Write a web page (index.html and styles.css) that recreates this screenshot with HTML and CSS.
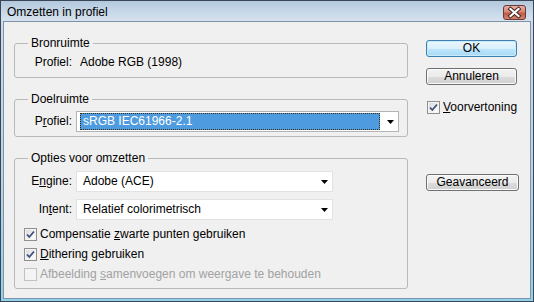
FILE: index.html
```html
<!DOCTYPE html>
<html>
<head>
<meta charset="utf-8">
<link rel="stylesheet" href="styles.css">
</head>
<body>
<div class="window">
  <div class="titlebar">
    <span class="title">Omzetten in profiel</span>
    <div class="close">
      <svg width="21" height="13" viewBox="0 0 21 13">
        <path d="M6.5 3 L14.5 10 M14.5 3 L6.5 10" stroke="#3a2020" stroke-width="4" stroke-linecap="square"/>
        <path d="M6.5 3 L14.5 10 M14.5 3 L6.5 10" stroke="#ffffff" stroke-width="2.2" stroke-linecap="square"/>
      </svg>
    </div>
  </div>
  <div class="client">
    <div class="main">
      <fieldset class="group g-src">
        <legend>Bronruimte</legend>
        <div class="row">
          <span class="lbl">Profiel:</span>
          <span class="val">Adobe RGB (1998)</span>
        </div>
      </fieldset>
      <fieldset class="group g-dst">
        <legend>Doelruimte</legend>
        <div class="row">
          <span class="lbl">P<u>r</u>ofiel:</span>
          <div class="select wide focus">
            <span class="highlight">sRGB IEC61966-2.1</span>
            <svg class="arrow" width="7" height="4" viewBox="0 0 7 4"><path d="M0 0 H7 L3.5 4 Z" fill="#000"/></svg>
          </div>
        </div>
      </fieldset>
      <fieldset class="group g-opt">
        <legend>Opties voor omzetten</legend>
        <div class="fields">
          <div class="row">
            <span class="lbl">E<u>n</u>gine:</span>
            <div class="select narrow">
              <span class="sel-text">Adobe (ACE)</span>
              <svg class="arrow" width="7" height="4" viewBox="0 0 7 4"><path d="M0 0 H7 L3.5 4 Z" fill="#000"/></svg>
            </div>
          </div>
          <div class="row">
            <span class="lbl">In<u>t</u>ent:</span>
            <div class="select narrow">
              <span class="sel-text">Relatief colorimetrisch</span>
              <svg class="arrow" width="7" height="4" viewBox="0 0 7 4"><path d="M0 0 H7 L3.5 4 Z" fill="#000"/></svg>
            </div>
          </div>
        </div>
        <div class="checks">
          <div class="check">
            <span class="cb checked"><svg width="11" height="11" viewBox="0 0 11 11"><path d="M2 5.5 L4.3 8 L9 2.5" fill="none" stroke="#3d4f7a" stroke-width="1.8"/></svg></span>
            <span>Compensatie <u>z</u>warte punten gebruiken</span>
          </div>
          <div class="check">
            <span class="cb checked"><svg width="11" height="11" viewBox="0 0 11 11"><path d="M2 5.5 L4.3 8 L9 2.5" fill="none" stroke="#3d4f7a" stroke-width="1.8"/></svg></span>
            <span><u>D</u>ithering gebruiken</span>
          </div>
          <div class="check disabled">
            <span class="cb"></span>
            <span>Afbeelding <u>s</u>amenvoegen om weergave te behouden</span>
          </div>
        </div>
      </fieldset>
    </div>
    <div class="side">
      <div class="btn default">OK</div>
      <div class="btn btn-cancel">Annuleren</div>
      <div class="check preview">
        <span class="cb checked"><svg width="11" height="11" viewBox="0 0 11 11"><path d="M2 5.5 L4.3 8 L9 2.5" fill="none" stroke="#3d4f7a" stroke-width="1.8"/></svg></span>
        <span><u>V</u>oorvertoning</span>
      </div>
      <div class="btn btn-adv">Geavanceerd</div>
    </div>
  </div>
</div>
</body>
</html>
```

FILE: styles.css
```css
html, body {
  margin: 0;
  padding: 0;
}
body {
  font: 12px/15px "Liberation Sans", Arial, sans-serif;
  color: #000;
  background: #fff;
}
.window {
  width: 534px;
  height: 302px;
  box-sizing: border-box;
  border: 1px solid #3a4657;
  background: linear-gradient(to bottom, #b2c7dc 0px, #cddbea 20px, #b9d3e6 60%, #8fd3ea 100%);
  display: flex;
  flex-direction: column;
}
.titlebar {
  height: 20px;
  flex: none;
  display: flex;
  justify-content: space-between;
  align-items: flex-start;
  background: linear-gradient(to bottom, #b3c8dd, #c9d9e9 60%, #d6e2ee);
}
.title {
  padding: 4px 0 0 6px;
  color: #000;
}
.close {
  margin: 4px 7px 0 0;
  width: 23px;
  height: 15px;
  box-sizing: border-box;
  border: 1px solid #6b3a36;
  border-radius: 3px;
  background: linear-gradient(to bottom, #e9aea4 0%, #d78677 45%, #c25a45 55%, #d6826e 100%);
  display: flex;
  align-items: center;
  justify-content: center;
}
.close svg {
  display: block;
}
.client {
  flex: 1;
  margin: 0 2px 2px 2px;
  border: 1px solid #7f93a8;
  background: #f0f0f0;
  display: flex;
  align-items: flex-start;
  gap: 18px;
  padding: 14px 0 0 10px;
}
.main {
  width: 394px;
  flex: none;
  display: flex;
  flex-direction: column;
  gap: 14px;
}
.group {
  margin: 0;
  padding: 0;
  min-width: 0;
  border: 1px solid #b9b9b9;
  border-radius: 3px;
}
.group legend {
  margin-left: 13px;
  padding: 0 3px;
  line-height: 15px;
}
.row {
  display: flex;
  align-items: center;
}
.lbl {
  width: 57px;
  flex: none;
  text-align: right;
}
.val {
  margin-left: 8px;
}
.g-src .row {
  padding: 4px 0 7px;
}
.g-dst .row {
  padding: 4px 0 4px;
}
.select {
  margin-left: 4px;
  height: 21px;
  box-sizing: border-box;
  border: 1px solid #e2e2e2;
  background: #fff;
  display: flex;
  align-items: center;
}
.select.focus {
  border-color: #b4b4b4;
}
.select.wide {
  width: 323px;
}
.select.narrow {
  width: 257px;
}
.sel-text {
  padding-left: 6px;
  flex: 1;
  white-space: nowrap;
}
.highlight {
  flex: none;
  width: 300px;
  height: 17px;
  box-sizing: border-box;
  margin-left: 3px;
  padding-left: 2px;
  background: #4e9be0;
  color: #fff;
  border: 1px dotted #3a2a10;
  line-height: 15px;
  white-space: nowrap;
}
.arrow {
  display: block;
  margin-left: auto;
  margin-right: 4px;
  flex: none;
}
.fields {
  padding-top: 5px;
  display: flex;
  flex-direction: column;
  gap: 7px;
}
.checks {
  padding: 4px 0 4px 9px;
  display: flex;
  flex-direction: column;
}
.check {
  height: 20px;
  display: flex;
  align-items: center;
  white-space: nowrap;
}
.check.disabled {
  color: #a2a2a2;
}
.cb {
  width: 13px;
  height: 13px;
  box-sizing: border-box;
  flex: none;
  margin-right: 3px;
  border: 1px solid #8f8f8f;
  box-shadow: inset 0 0 0 1px #f4f4f4;
  background: linear-gradient(135deg, #d6d6d6 0%, #f3f3f3 60%, #ffffff 100%);
  display: flex;
  align-items: center;
  justify-content: center;
}
.cb svg {
  display: block;
}
.disabled .cb {
  border-color: #c2c2c2;
  background: #f4f4f4;
}
.side {
  width: 93px;
  flex: none;
  margin-top: 4px;
  display: flex;
  flex-direction: column;
  align-items: flex-start;
}
.btn {
  width: 91px;
  height: 17px;
  box-sizing: border-box;
  border: 1px solid #707070;
  border-radius: 3px;
  background: linear-gradient(to bottom, #f3f3f3 0%, #ebebeb 50%, #dddddd 51%, #cfcfcf 100%);
  box-shadow: inset 0 0 0 1px #fbfbfb;
  text-align: center;
  line-height: 15px;
}
.btn.default {
  border-color: #3c7fb1;
  background: linear-gradient(to bottom, #eaf6fd 0%, #d9f0fc 50%, #bee6fd 51%, #a7d9f5 100%);
  box-shadow: inset 0 0 0 1px #c8ecfc;
}
.btn-cancel {
  margin-top: 11px;
}
.preview {
  margin-top: 14px;
  height: 17px;
  padding-left: 1px;
}
.btn-adv {
  margin-top: 58px;
  width: 93px;
}
```
